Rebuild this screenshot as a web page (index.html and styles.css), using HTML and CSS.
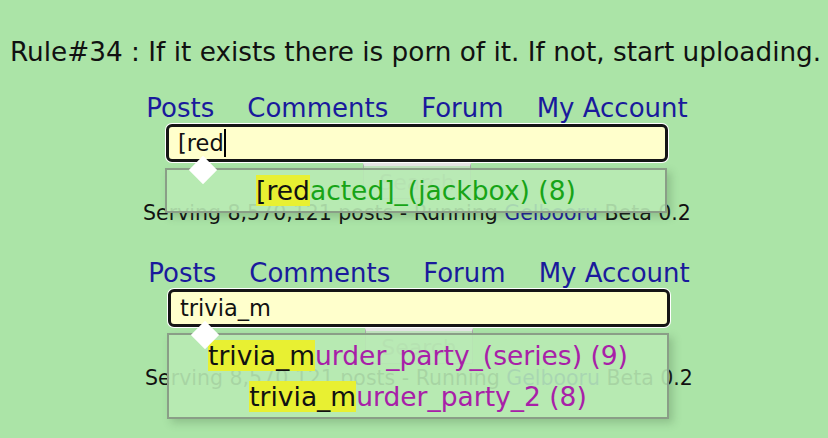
FILE: index.html
```html
<!DOCTYPE html>
<html lang="en">
<head>
    <meta charset="UTF-8">
    <title>Rule#34</title>
    <link rel="stylesheet" href="styles.css">
</head>
<body>
    <p class="motto">Rule#34 : If it exists there is porn of it. If not, start uploading.</p>

    <div class="block">
        <nav class="menu">
            <a href="#">Posts</a>
            <a href="#">Comments</a>
            <a href="#">Forum</a>
            <a href="#">My Account</a>
        </nav>
        <form class="search">
            <div class="field"><span class="typed">[red</span><span class="caret"></span></div>
            <input class="btn" type="submit" value="Search">
            <span class="pointer"></span>
            <ul class="suggest">
                <li class="tag-green"><mark>[red</mark>acted]_(jackbox) (8)</li>
            </ul>
        </form>
        <p class="stats">Serving 8,570,121 posts - Running <a href="#">Gelbooru</a> Beta 0.2</p>
    </div>

    <div class="block second">
        <nav class="menu">
            <a href="#">Posts</a>
            <a href="#">Comments</a>
            <a href="#">Forum</a>
            <a href="#">My Account</a>
        </nav>
        <form class="search">
            <div class="field"><span class="typed">trivia_m</span></div>
            <input class="btn" type="submit" value="Search">
            <span class="pointer"></span>
            <ul class="suggest">
                <li class="tag-purple"><mark>trivia_m</mark>urder_party_(series) (9)</li>
                <li class="tag-purple"><mark>trivia_m</mark>urder_party_2 (8)</li>
            </ul>
        </form>
        <p class="stats">Serving 8,570,121 posts - Running <a href="#">Gelbooru</a> Beta 0.2</p>
    </div>
</body>
</html>
```

FILE: styles.css
```css
html {
    height: 100%;
}

body {
    margin: 0;
    padding: 0;
    min-height: 100%;
    background-color: #abe4a7;
    font-family: "DejaVu Sans", Verdana, sans-serif;
    color: #111;
}

.motto {
    margin: 38px 0 0 10px;
    font-size: 26.3px;
    line-height: 28px;
    white-space: nowrap;
}

.block {
    box-sizing: border-box;
    display: flex;
    flex-direction: column;
    align-items: center;
    width: 828px;
    padding-left: 6px;
    margin-top: 27px;
}

.block.second {
    margin-top: 33px;
    padding-left: 10px;
}

.menu {
    display: flex;
    gap: 33px;
    font-size: 26px;
    line-height: 30px;
}

.menu a {
    color: #1a1a9c;
    text-decoration: none;
}

.search {
    position: relative;
    width: 502px;
    display: flex;
    flex-direction: column;
    align-items: center;
    margin-top: 1px;
}

.field {
    box-sizing: border-box;
    width: 502px;
    height: 38px;
    border: 3px solid #151515;
    border-radius: 6px;
    box-shadow: 0 0 0 1px #fff;
    background: #ffffcc;
    padding: 0 9px;
    font-size: 22.5px;
    line-height: 32px;
    display: flex;
    align-items: center;
}

.caret {
    display: inline-block;
    width: 2px;
    height: 28px;
    background: #000;
}

.btn {
    margin-top: 1px;
    width: 108px;
    height: 36px;
    border: 1px solid #aaa;
    border-top: 3px solid #e4e4e4;
    background: #c2e6c0;
    color: #999;
    font-family: "DejaVu Sans", Verdana, sans-serif;
    font-size: 22px;
}

.pointer {
    position: absolute;
    left: 27px;
    top: 36px;
    width: 20px;
    height: 20px;
    background: #fff;
    transform: rotate(45deg);
    z-index: 2;
}

.suggest {
    position: absolute;
    left: -1px;
    top: 44px;
    width: 498px;
    margin: 0;
    padding: 0;
    list-style: none;
    border: 2px solid #8a9e87;
    background: rgba(184, 234, 180, 0.9);
    box-shadow: 4px 4px 8px rgba(60, 90, 60, 0.25);
    text-align: center;
    font-size: 26.5px;
    line-height: 41px;
    z-index: 1;
}

.suggest mark {
    background: #e8f032;
    color: #111;
}

.tag-green {
    color: #17a417;
}

.tag-purple {
    color: #a820a8;
}

.stats {
    margin: 2px 0 0;
    font-size: 20.5px;
    line-height: 24px;
    white-space: nowrap;
}

.stats a {
    color: #1a1a9c;
    text-decoration: none;
}
```
